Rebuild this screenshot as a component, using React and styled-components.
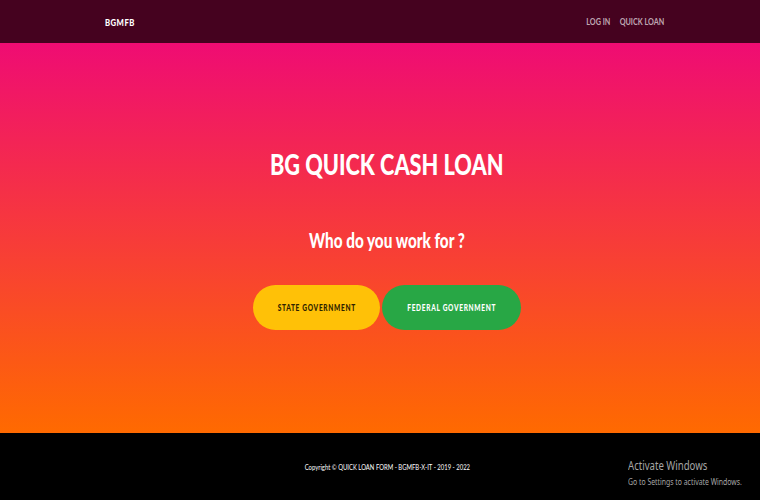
import React from 'react';
import styled, { createGlobalStyle, css } from 'styled-components';

const GlobalStyle = createGlobalStyle`
  html, body {
    margin: 0;
    padding: 0;
    height: 100%;
  }
  body {
    font-family: 'Lato', 'Open Sans', sans-serif;
    background: #000;
  }
`;

// the type in this layout is set narrow
const squeeze = (origin = 'center', amount = 0.77) => css`
  transform: scaleX(${amount});
  transform-origin: ${origin} center;
`;

const App = () => {
  return (
    <>
      <GlobalStyle />
      <Page>
        <Navbar>
          <Brand>BGMFB</Brand>
          <NavLinks>
            <NavLink>LOG IN</NavLink>
            <NavLink>QUICK LOAN</NavLink>
          </NavLinks>
        </Navbar>

        <Hero>
          <Title>BG QUICK CASH LOAN</Title>
          <Question>Who do you work for ?</Question>
          <ButtonRow>
            <ChoiceButton variant="state" width={127}>
              <ButtonLabel>STATE GOVERNMENT</ButtonLabel>
            </ChoiceButton>
            <ChoiceButton variant="federal" width={139}>
              <ButtonLabel>FEDERAL GOVERNMENT</ButtonLabel>
            </ChoiceButton>
          </ButtonRow>
        </Hero>

        <Footer>
          <Copyright>Copyright © QUICK LOAN FORM - BGMFB-X-IT - 2019 - 2022</Copyright>
          <Watermark>
            <strong>Activate Windows</strong>
            <span>Go to Settings to activate Windows.</span>
          </Watermark>
        </Footer>
      </Page>
    </>
  );
};

// Styled Components
const Page = styled.div`
  height: 500px;
  display: flex;
  flex-direction: column;
  position: relative;
  overflow: hidden;
`;

const Navbar = styled.header`
  height: 43px;
  background: #45021f;
  display: flex;
  align-items: center;
  justify-content: space-between;
  padding: 0 96px 0 105px;
  flex-shrink: 0;
`;

const Brand = styled.div`
  color: #fff;
  font-weight: 900;
  font-size: 10px;
  letter-spacing: 0.6px;
  ${squeeze('left')}
`;

const NavLinks = styled.nav`
  display: flex;
  gap: 12px;
  ${squeeze('right')}
`;

const NavLink = styled.span`
  color: rgba(255, 255, 255, 0.66);
  font-size: 9.4px;
  font-weight: 700;
`;

const Hero = styled.main`
  flex: 1;
  background: linear-gradient(#ef0c73, #ff6a00);
  display: flex;
  flex-direction: column;
  align-items: center;
  padding: 104px 0 0 14px;
`;

const Title = styled.h1`
  margin: 0;
  color: #fff;
  font-size: 28px;
  line-height: 34px;
  font-weight: 900;
  white-space: nowrap;
  ${squeeze('center', 0.775)}
`;

const Question = styled.h2`
  margin: 47px 0 0;
  color: #fff;
  font-size: 20px;
  line-height: 24px;
  font-weight: 900;
  white-space: nowrap;
  ${squeeze('center', 0.765)}
`;

const ButtonRow = styled.div`
  display: flex;
  gap: 2px;
  margin-top: 33px;
`;

const ChoiceButton = styled.button`
  width: ${p => p.width}px;
  height: 45px;
  padding: 0;
  border: none;
  border-radius: 23px;
  display: flex;
  align-items: center;
  justify-content: center;
  font-family: inherit;
  background: ${p => (p.variant === 'state' ? '#ffc107' : '#28a745')};
  color: ${p => (p.variant === 'state' ? '#2e2200' : '#fff')};
`;

const ButtonLabel = styled.span`
  font-size: 8.5px;
  font-weight: 900;
  letter-spacing: 0.9px;
  white-space: nowrap;
  ${squeeze()}
`;

const Footer = styled.footer`
  height: 67px;
  background: #000;
  display: flex;
  align-items: center;
  justify-content: center;
  padding-left: 14px;
  flex-shrink: 0;
`;

const Copyright = styled.p`
  margin: 0;
  color: #fff;
  font-size: 7.7px;
  white-space: nowrap;
  ${squeeze()}
`;

const Watermark = styled.div`
  position: absolute;
  left: 628px;
  bottom: 12px;
  display: flex;
  flex-direction: column;
  gap: 2px;
  color: #a6a6a6;
  font-family: 'Noto Sans', sans-serif;
  white-space: nowrap;
  transform: scaleX(0.8);
  transform-origin: left center;

  strong {
    font-weight: 400;
    font-size: 12px;
  }

  span {
    font-size: 8.6px;
  }
`;

export default App;
